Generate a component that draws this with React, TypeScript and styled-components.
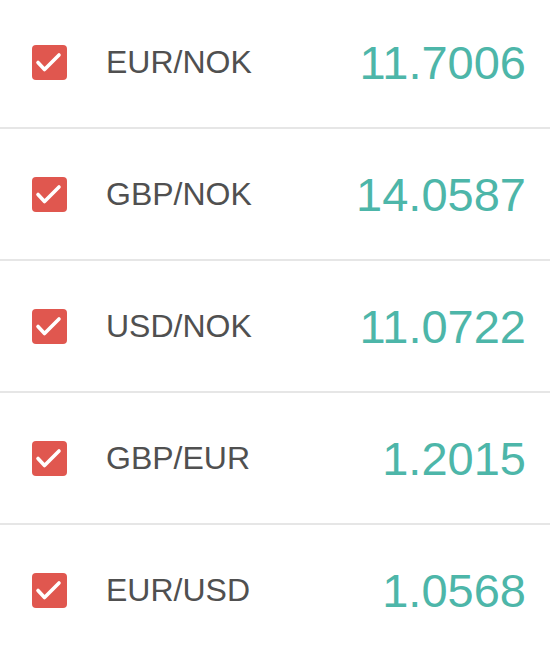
import { createGlobalStyle, styled } from "styled-components";

const GlobalStyle = createGlobalStyle`
  body {
    margin: 0;
    background: #ffffff;
    font-family: "Liberation Sans", Arial, sans-serif;
  }
`;

const List = styled.div`
  margin-top: -3px;
`;

const Row = styled.div`
  display: flex;
  align-items: center;
  height: 130px;
  padding: 0 24px 0 32px;
  border-bottom: 2px solid #e6e6e6;
`;

const Check = styled.div`
  width: 35px;
  height: 35px;
  flex: none;
  border-radius: 4px;
  background: #e0574f;
  display: flex;
`;

const Label = styled.span`
  margin-left: 39px;
  font-size: 32px;
  color: #505050;
  flex: 1;
`;

const Rate = styled.span`
  font-size: 47px;
  color: #4db6a9;
`;

const rates = [
  { pair: "EUR/NOK", value: "11.7006" },
  { pair: "GBP/NOK", value: "14.0587" },
  { pair: "USD/NOK", value: "11.0722" },
  { pair: "GBP/EUR", value: "1.2015" },
  { pair: "EUR/USD", value: "1.0568" },
];

export default function App() {
  return (
    <>
      <GlobalStyle />
      <List>
        {rates.map((r) => (
          <Row key={r.pair}>
            <Check>
              <svg width="35" height="35" viewBox="0 0 35 35">
                <polyline
                  points="6,17.5 12.5,24.5 27,10"
                  fill="none"
                  stroke="#ffffff"
                  strokeWidth="3.6"
                  strokeLinecap="round"
                  strokeLinejoin="round"
                />
              </svg>
            </Check>
            <Label>{r.pair}</Label>
            <Rate>{r.value}</Rate>
          </Row>
        ))}
      </List>
    </>
  );
}
